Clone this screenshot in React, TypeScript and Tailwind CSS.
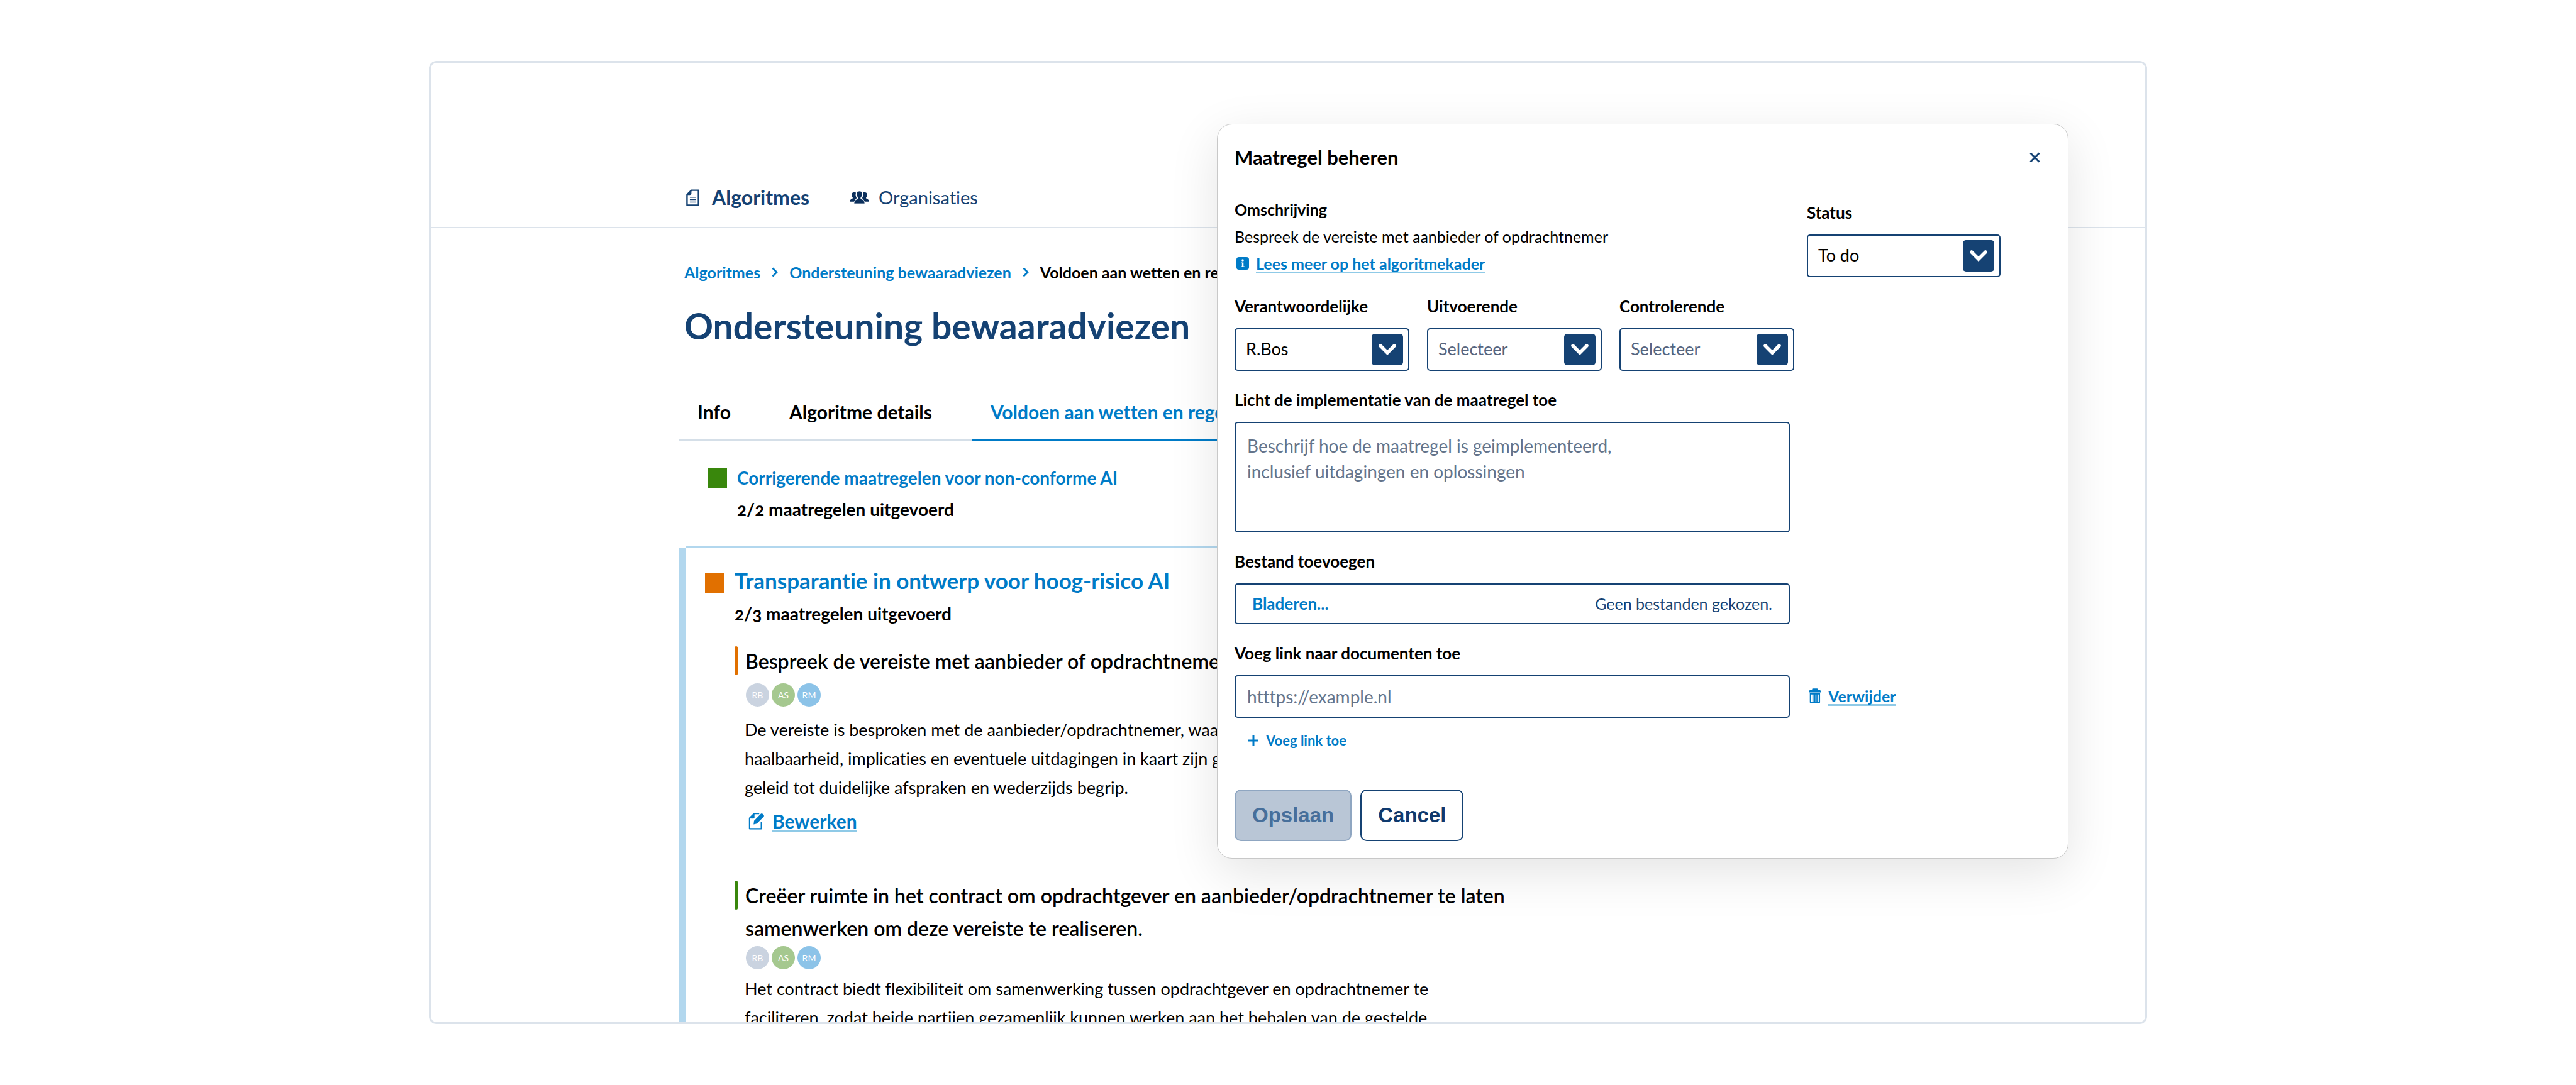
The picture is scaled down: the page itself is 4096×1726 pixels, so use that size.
import { useId, type ReactNode } from "react";

const linkUnderline =
  "underline decoration-[#8fcae7] decoration-[3px] underline-offset-[3px] [text-decoration-skip-ink:none]";

function DocumentIcon() {
  return (
    <svg viewBox="0 0 30 38" className="h-[27px] w-[21px]" fill="none" aria-hidden="true">
      <path d="M12 2H28V36H2V12Z" stroke="#154273" strokeWidth="3.4" strokeLinejoin="round" />
      <path d="M1.500 12L12 1.500V9.500Q12 13 8.500 13H1.500Z" fill="#154273" />
      <path d="M8.500 18H22M8.500 23.500H22M8.500 29H22" stroke="#154273" strokeWidth="1.900" />
    </svg>
  );
}

function PeopleIcon() {
  return (
    <svg viewBox="0 0 130 84" className="h-[20px] w-[31px]" fill="#0b2f5c" aria-hidden="true">
      <path d="M14 20C14 6 40 4 42 12C38 22 40 34 46 44L44 54C36 56 34 62 31 70H0C0 58 6 56 16 51C22 48 22 44 18 40C14 36 14 28 14 20Z" />
      <path d="M116 20C116 6 90 4 88 12C92 22 90 34 84 44L86 54C94 56 96 62 99 70H130C130 58 124 56 114 51C108 48 108 44 112 40C116 36 116 28 116 20Z" />
      <path
        d="M65 0C78 0 84 8 84 20C84 31 80 38 75 43C73 49 75 53 82 55C94 59 100 66 101 84H29C30 66 36 59 48 55C55 53 57 49 55 43C50 38 46 31 46 20C46 8 52 0 65 0Z"
        stroke="#fff"
        strokeWidth="3"
      />
    </svg>
  );
}

function EditIcon() {
  return (
    <svg viewBox="32 32 108 118" className="h-[28px] w-[26px]" fill="none" aria-hidden="true">
      <path d="M104 41H70L39 72V143H118V98" stroke="#007bc7" strokeWidth="9" strokeLinejoin="round" />
      <path d="M35 74L72 37V68Q72 75 65 75Z" fill="#007bc7" />
      <path d="M66 114L69 90L115 43Q121 38 127 44L134 51Q139 57 134 63L88 109Z" fill="#007bc7" />
    </svg>
  );
}

function TrashIcon() {
  return (
    <svg viewBox="30 42 82 98" className="h-[24px] w-[20px]" fill="#007bc7" aria-hidden="true">
      <path d="M52 54V48Q52 43 57 43H84Q89 43 89 48V54H104Q110 56 110 68H31Q31 56 37 54Z" />
      <path
        fillRule="evenodd"
        d="M37 73H104V133Q104 139 98 139H43Q37 139 37 133ZM46 82V131H54V82ZM61 82V131H67V82ZM74 82V131H80V82ZM87 82V131H95V82Z"
      />
    </svg>
  );
}

function InfoIcon() {
  return (
    <svg viewBox="0 0 20 20" className="size-[20px]" aria-hidden="true">
      <rect width="20" height="20" rx="4" fill="#007bc7" />
      <circle cx="10" cy="5" r="1.800" fill="#fff" />
      <path d="M7.500 8.500H11.300V14.500H12.800V16H7.300V14.500H8.800V10H7.500Z" fill="#fff" />
    </svg>
  );
}

function CloseIcon() {
  return (
    <svg viewBox="0 0 17 17" className="size-[17px]" aria-hidden="true">
      <path d="M1.500 1.500L15.500 15.500M15.500 1.500L1.500 15.500" stroke="#154273" strokeWidth="2.800" />
    </svg>
  );
}

function PlusIcon() {
  return (
    <svg viewBox="0 0 16 16" className="size-[16px]" aria-hidden="true">
      <path d="M8 0V16M0 8H16" stroke="#007bc7" strokeWidth="3" />
    </svg>
  );
}

function CrumbChevron() {
  return (
    <svg viewBox="0 0 10 16" className="h-[16px] w-[10px]" fill="none" aria-hidden="true">
      <path d="M1.500 1.500L8 8L1.500 14.500" stroke="#007bc7" strokeWidth="2.800" />
    </svg>
  );
}

function Avatars() {
  return (
    <div className="flex gap-1 pl-[18px] text-[14px] leading-[37px] text-white">
      <span className="size-[37px] rounded-full bg-[#cad3e0] text-center">RB</span>
      <span className="size-[37px] rounded-full bg-[#a5c88f] text-center">AS</span>
      <span className="size-[37px] rounded-full bg-[#8cc3e8] text-center">RM</span>
    </div>
  );
}

function Measure({ barClass, title, children }: { barClass: string; title: ReactNode; children: ReactNode }) {
  return (
    <article>
      <div className="flex gap-3">
        <span className={`mt-[2px] h-[46px] w-[5px] shrink-0 rounded-full ${barClass}`} />
        <h3 className="text-[32px] leading-[52px] font-semibold">{title}</h3>
      </div>
      {children}
    </article>
  );
}

function SelectField({
  label,
  options,
  muted = false,
  className,
}: {
  label: string;
  options: string[];
  muted?: boolean;
  className: string;
}) {
  const id = useId();
  return (
    <div className={`flex flex-col gap-[19px] ${className}`}>
      <label htmlFor={id} className="text-[26px] leading-8 font-bold">
        {label}
      </label>
      <div className="relative">
        <select
          id={id}
          className={`h-[68px] w-full appearance-none rounded-[5px] border-2 border-[#154273] bg-white pb-[2px] pl-4 text-[27px] ${
            muted ? "text-[#56657f]" : "text-black"
          }`}
        >
          {options.map((o) => (
            <option key={o}>{o}</option>
          ))}
        </select>
        <span className="pointer-events-none absolute top-[9px] right-[10px] flex size-[50px] items-center justify-center rounded-[5px] bg-[#154273]">
          <svg viewBox="0 0 28 18" className="h-[18px] w-[28px]" fill="none" aria-hidden="true">
            <path d="M3 3L14 14L25 3" stroke="#fff" strokeWidth="5.500" strokeLinecap="round" strokeLinejoin="miter" />
          </svg>
        </span>
      </div>
    </div>
  );
}

function MeasureDialog() {
  return (
    <form
      role="dialog"
      aria-labelledby="dialog-title"
      className="absolute top-[197px] right-[807px] w-[1354px] rounded-[24px] border border-[#c8c8c8] bg-white pt-8 pb-[27px] pl-[27px] shadow-[0_22px_80px_rgba(0,0,0,0.11)]"
    >
      <div className="flex items-center justify-between pr-[33px]">
        <h2 id="dialog-title" className="text-[31px] leading-10 font-bold">
          Maatregel beheren
        </h2>
        <button type="button" aria-label="Sluiten" className="flex size-10 items-center justify-center">
          <CloseIcon />
        </button>
      </div>

      <div className="mt-[47px] flex">
        <div className="flex w-[910px] flex-col gap-[11px] text-[25px] leading-8">
          <h3 className="font-bold">Omschrijving</h3>
          <p>Bespreek de vereiste met aanbieder of opdrachtnemer</p>
          <div className="flex items-center gap-[11px] pl-[3px]">
            <InfoIcon />
            <a href="#kader" className={`font-bold text-[#007bc7] ${linkUnderline}`}>
              Lees meer op het algoritmekader
            </a>
          </div>
        </div>
        <SelectField label="Status" options={["To do", "In progress", "Done"]} className="mt-[5px] w-[308px]" />
      </div>

      <div className="mt-[30px] flex gap-7">
        <SelectField label="Verantwoordelijke" options={["R.Bos"]} className="w-[278px]" />
        <SelectField label="Uitvoerende" options={["Selecteer"]} muted className="w-[278px]" />
        <SelectField label="Controlerende" options={["Selecteer"]} muted className="w-[278px]" />
      </div>

      <div className="mt-[30px] flex w-[883px] flex-col gap-[19px]">
        <label htmlFor="toelichting" className="text-[26px] leading-8 font-bold">
          Licht de implementatie van de maatregel toe
        </label>
        <textarea
          id="toelichting"
          placeholder={"Beschrijf hoe de maatregel is geimplementeerd,\ninclusief uitdagingen en oplossingen"}
          className="h-[176px] resize-none rounded-[5px] border-2 border-[#154273] px-[18px] py-4 text-[28px] leading-[41px] placeholder:text-[#64748b]"
        />
      </div>

      <div className="mt-[30px] flex w-[883px] flex-col gap-[19px]">
        <label htmlFor="bestand" className="text-[26px] leading-8 font-bold">
          Bestand toevoegen
        </label>
        <label
          htmlFor="bestand"
          className="relative flex h-[65px] items-center justify-between rounded-[5px] border-2 border-[#154273] px-[26px]"
        >
          <span className="text-[26px] font-bold text-[#007bc7]">Bladeren...</span>
          <span className="text-[25px] text-[#154273]">Geen bestanden gekozen.</span>
          <input id="bestand" type="file" className="sr-only" />
        </label>
      </div>

      <div className="mt-[30px] flex flex-col gap-[19px]">
        <label htmlFor="link" className="text-[26px] leading-8 font-bold">
          Voeg link naar documenten toe
        </label>
        <div className="flex items-center gap-[30px]">
          <input
            id="link"
            type="url"
            placeholder="htttps://example.nl"
            className="h-[68px] w-[883px] rounded-[5px] border-2 border-[#154273] px-[18px] text-[28px] placeholder:text-[#64748b]"
          />
          <button type="button" className="flex items-center gap-[11px] pb-[2px] text-[25px] leading-8 font-bold text-[#007bc7]">
            <TrashIcon />
            <span className={linkUnderline}>Verwijder</span>
          </button>
        </div>
      </div>
      <button
        type="button"
        className="mt-[22px] ml-[22px] flex items-center gap-3 text-[22px] leading-7 font-bold text-[#007bc7]"
      >
        <PlusIcon />
        Voeg link toe
      </button>

      <div className="mt-16 flex gap-[14px] font-['Liberation_Sans',Arial,sans-serif] text-[33px] font-bold">
        <button
          type="submit"
          disabled
          className="h-[82px] rounded-[10px] border-2 border-[#8fa6c1] bg-[#b9c6d6] px-[26px] text-[#476f9b]"
        >
          Opslaan
        </button>
        <button type="button" className="h-[82px] rounded-[10px] border-2 border-[#154273] bg-white px-[26px] text-[#0f3a6e]">
          Cancel
        </button>
      </div>
    </form>
  );
}

export default function App() {
  return (
    <div className="relative h-screen overflow-hidden bg-white px-[682px] py-[97px] font-['Lato','Noto_Sans',sans-serif] text-black [font-variant-ligatures:none]">
      <main className="h-full overflow-hidden rounded-[12px] border-[3px] border-[#dce3eb]">
        <header className="flex h-[263px] items-end border-b-2 border-[#dce3eb] pb-[27px] pl-[406px]">
          <nav className="flex gap-[64px] leading-10 text-[#154273]">
            <a href="#algoritmes" className="flex items-center gap-5 text-[32px] font-bold">
              <DocumentIcon />
              Algoritmes
            </a>
            <a href="#organisaties" className="flex items-center gap-[15px] text-[29px]">
              <PeopleIcon />
              Organisaties
            </a>
          </nav>
        </header>

        <div className="pr-[500px] pl-[394px] whitespace-nowrap">
          <nav aria-label="Kruimelpad" className="mt-[54px] flex items-center gap-[18px] pl-[9px] text-[25px] leading-8 font-bold">
            <a href="#algoritmes" className="text-[#007bc7]">
              Algoritmes
            </a>
            <CrumbChevron />
            <a href="#bewaaradviezen" className="text-[#007bc7]">
              Ondersteuning bewaaradviezen
            </a>
            <CrumbChevron />
            <span>Voldoen aan wetten en regels</span>
          </nav>

          <h1 className="mt-[35px] pl-[9px] text-[57px] leading-[68px] font-bold text-[#154273]">
            Ondersteuning bewaaradviezen
          </h1>

          <nav
            aria-label="Onderdelen"
            className="mt-[83px] flex gap-[33px] border-b-[3px] border-[#d5dfe8] text-[30px] leading-10 font-bold"
          >
            <a href="#info" className="px-[30px] pb-[23px]">
              Info
            </a>
            <a href="#details" className="px-[30px] pb-[23px]">
              Algoritme details
            </a>
            <a href="#regels" className="-mb-[3px] border-b-[3px] border-[#007bc7] px-[30px] pb-[23px] text-[#007bc7]">
              Voldoen aan wetten en regels
            </a>
          </nav>

          <section className="flex gap-4 pt-[39px] pb-[39px] pl-[46px] font-bold">
            <span className="mt-[5px] h-8 w-[31px] bg-[#39870c]" />
            <div className="flex flex-col gap-[10px] text-[28px] leading-10">
              <h2 className="text-[#007bc7]">Corrigerende maatregelen voor non-conforme AI</h2>
              <p className="oldstyle-nums">2/2 maatregelen uitgevoerd</p>
            </div>
          </section>

          <section className="flex">
            <div className="mt-[2px] w-[11px] shrink-0 bg-[#b2d7ee]" />
            <div className="grow border-t-2 border-[#b2d7ee] pt-[30px] pl-[31px]">
              <div className="flex gap-4 font-bold">
                <span className="mt-[10px] h-8 w-[31px] bg-[#e17000]" />
                <div className="flex flex-col gap-[11px]">
                  <h2 className="text-[35px] leading-[44px] text-[#007bc7]">Transparantie in ontwerp voor hoog-risico AI</h2>
                  <p className="text-[28px] leading-10 oldstyle-nums">2/3 maatregelen uitgevoerd</p>
                </div>
              </div>

              <div className="flex flex-col gap-[73px] pt-[30px] pl-[47px]">
                <Measure barClass="bg-[#e17000]" title="Bespreek de vereiste met aanbieder of opdrachtnemer">
                  <div className="mt-[9px]">
                    <Avatars />
                  </div>
                  <p className="mt-[14px] pl-4 text-[27px] leading-[46px]">
                    De vereiste is besproken met de aanbieder/opdrachtnemer, waarbij
                    <br />
                    haalbaarheid, implicaties en eventuele uitdagingen in kaart zijn gebracht
                    <br />
                    geleid tot duidelijke afspraken en wederzijds begrip.
                  </p>
                  <a
                    href="#bewerken"
                    className="mt-[10px] flex items-center gap-3 pl-[22px] text-[30px] leading-10 font-bold text-[#007bc7]"
                  >
                    <EditIcon />
                    <span className={linkUnderline}>Bewerken</span>
                  </a>
                </Measure>

                <Measure
                  barClass="bg-[#39870c]"
                  title={
                    <>
                      Creëer ruimte in het contract om opdrachtgever en aanbieder/opdrachtnemer te laten
                      <br />
                      samenwerken om deze vereiste te realiseren.
                    </>
                  }
                >
                  <div className="mt-[2px]">
                    <Avatars />
                  </div>
                  <p className="mt-2 pl-4 text-[27px] leading-[46px]">
                    Het contract biedt flexibiliteit om samenwerking tussen opdrachtgever en opdrachtnemer te
                    <br />
                    faciliteren, zodat beide partijen gezamenlijk kunnen werken aan het behalen van de gestelde
                  </p>
                </Measure>
              </div>
            </div>
          </section>
        </div>
      </main>
      <MeasureDialog />
    </div>
  );
}
